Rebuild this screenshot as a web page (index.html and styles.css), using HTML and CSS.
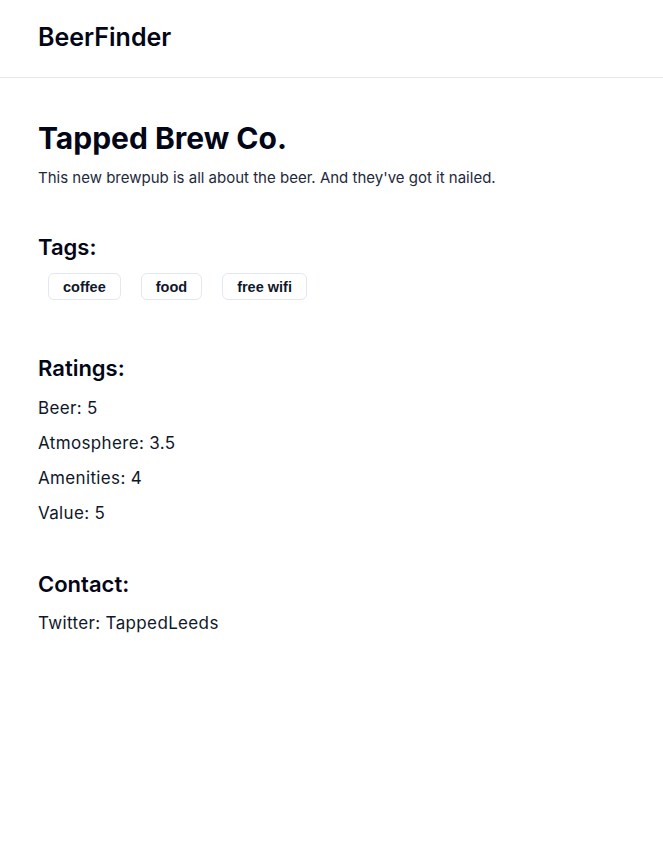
FILE: index.html
```html
<!DOCTYPE html>
<html>
<head>
<meta charset="utf-8">
<link rel="stylesheet" href="styles.css">
</head>
<body>
<header class="topbar">
  <div class="brand">BeerFinder</div>
</header>
<main class="content">
  <h1 class="title">Tapped Brew Co.</h1>
  <p class="desc">This new brewpub is all about the beer. And they've got it nailed.</p>

  <section class="section tagsec">
    <h2 class="heading">Tags:</h2>
    <div class="tags">
      <span class="tag">coffee</span>
      <span class="tag">food</span>
      <span class="tag">free wifi</span>
    </div>
  </section>

  <section class="section ratings">
    <h2 class="heading">Ratings:</h2>
    <p class="line">Beer: 5</p>
    <p class="line">Atmosphere: 3.5</p>
    <p class="line">Amenities: 4</p>
    <p class="line">Value: 5</p>
  </section>

  <section class="section contact">
    <h2 class="heading">Contact:</h2>
    <p class="line">Twitter: TappedLeeds</p>
  </section>
</main>
</body>
</html>
```
FILE: styles.css
```css
* { box-sizing: border-box; }
body {
  margin: 0;
  font-family: Inter, "Noto Sans", sans-serif;
  color: #0f172a;
  background: #fff;
}
.topbar {
  height: 78px;
  border-bottom: 1px solid #e5e7eb;
  padding: 0 38px;
  display: flex;
  align-items: center;
}
.brand {
  font-size: 25px;
  font-weight: 600;
  color: #020617;
  margin-top: -3px;
}
.content {
  padding: 42px 38px 0;
}
.title {
  margin: 0;
  font-size: 30px;
  font-weight: 700;
  line-height: 36px;
  color: #020617;
}
.desc {
  margin: 12px 0 0;
  font-size: 15px;
  line-height: 20px;
  color: #1e293b;
}
.section { margin-top: 43px; }
.tagsec { margin-top: 45px; }
.heading {
  margin: 0;
  font-size: 22px;
  font-weight: 600;
  line-height: 28px;
  color: #020617;
}
.tags {
  display: flex;
  margin-top: 12px;
}
.tag {
  margin: 0 10px;
  height: 27px;
  padding: 0 14px;
  border: 1px solid #e2e8f0;
  border-radius: 6px;
  display: flex;
  align-items: center;
  font-family: "Liberation Sans", Arial, sans-serif;
  font-weight: 700;
  font-size: 14.5px;
  color: #0f172a;
}
.ratings { margin-top: 54px; }
.line {
  margin: 0;
  font-size: 17px;
  letter-spacing: 0.35px;
  line-height: 35px;
  color: #0f172a;
}
.ratings .heading { margin-bottom: 9px; }
.contact { margin-top: 39px; }
.contact .heading { margin-bottom: 8px; }
```
